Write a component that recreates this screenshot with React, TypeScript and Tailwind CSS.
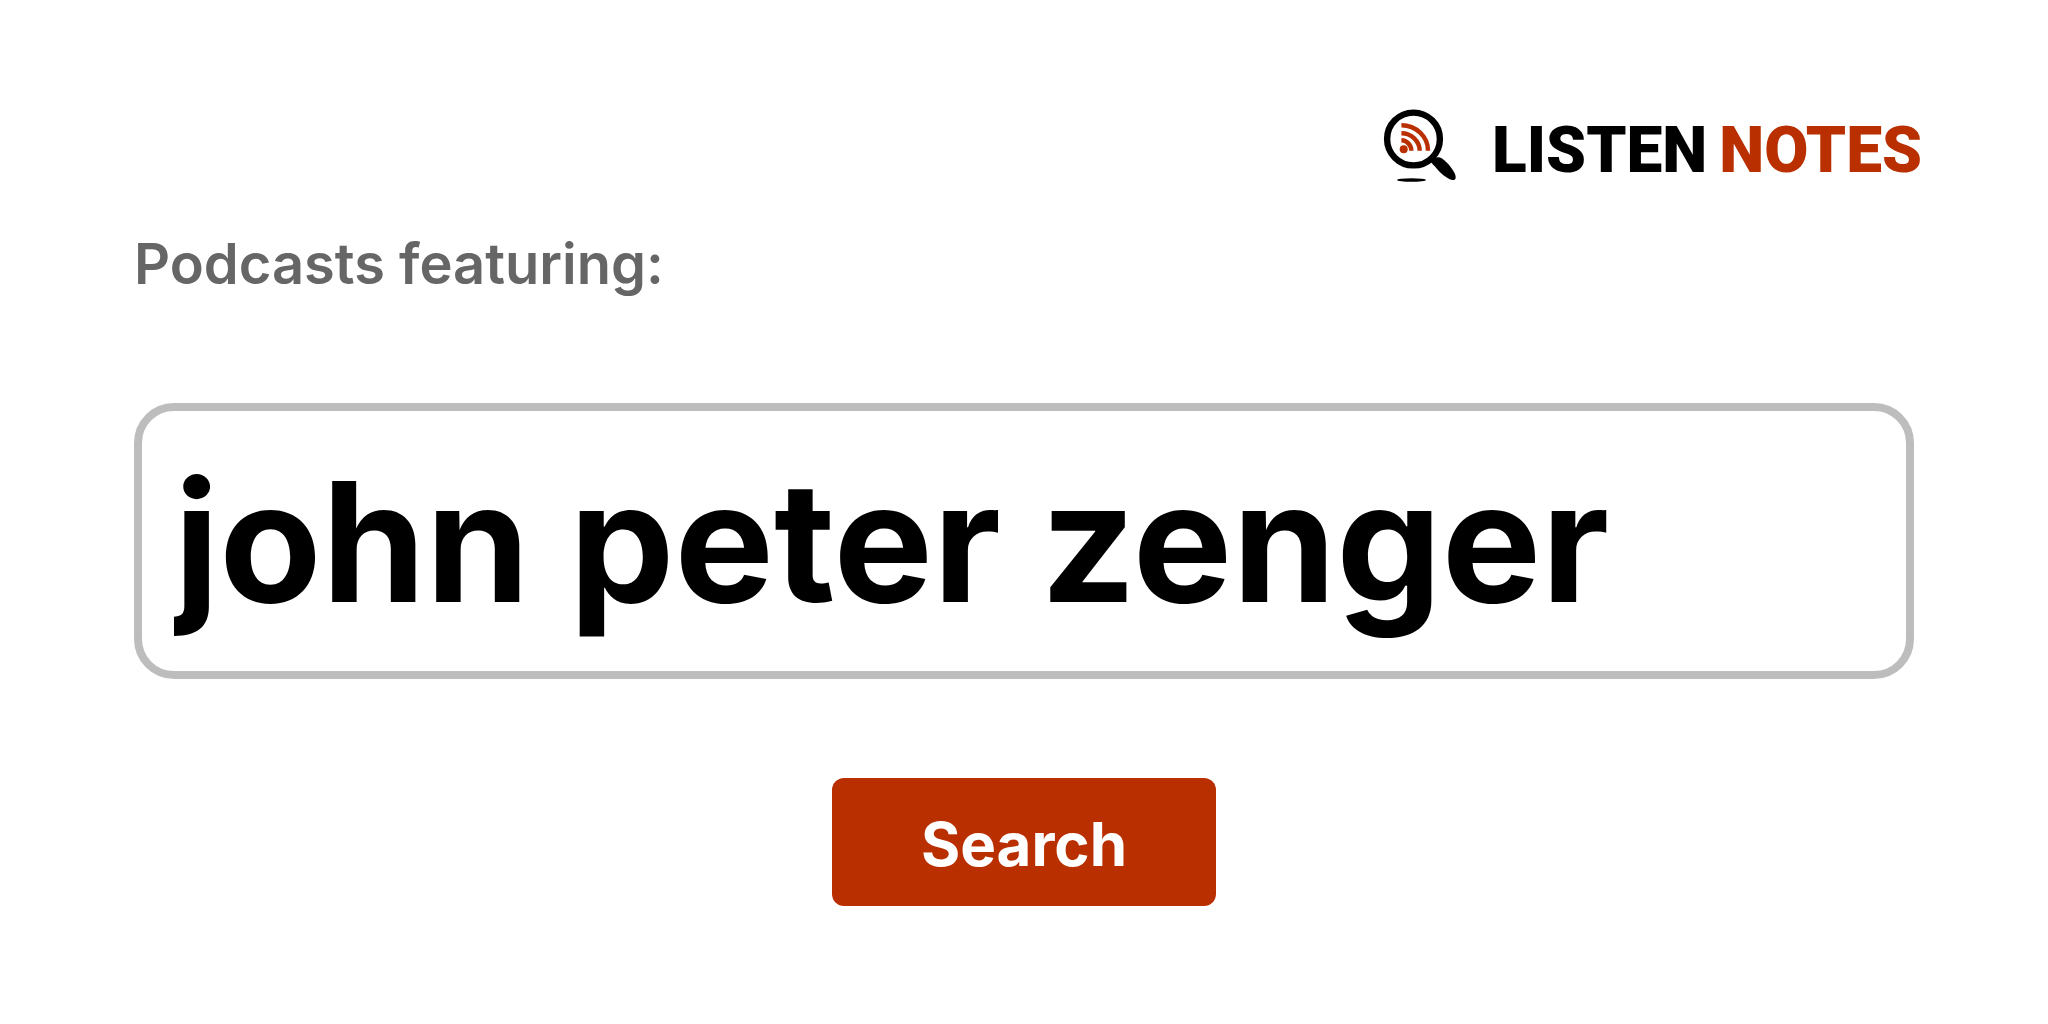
export default function App() {
  return (
    <main className="min-h-screen bg-white px-[134px] pt-[104px] font-['Inter',sans-serif] text-black">
      <header className="-mr-2 flex justify-end">
        <a href="#" className="flex items-start gap-[34px]" aria-label="Listen Notes">
          <svg viewBox="0 0 76 80" className="h-20 w-[76px]" aria-hidden="true">
            <circle cx="31.5" cy="35" r="26.4" fill="none" stroke="#000" strokeWidth="6.4" />
            <path d="M48 52L55 60" stroke="#000" strokeWidth="6.5" />
            <path d="M50.5 58C51 54.5 54 52.5 58 53.5C63 55.5 70 63.5 73 70C74.5 74.5 73.5 76.5 70 76C63 74 53 64.500 50.5 58Z" fill="#000" />
            <ellipse cx="29.5" cy="76" rx="14.5" ry="1.8" fill="#000" />
            <g fill="none" stroke="#b92f00" strokeWidth="4.4">
              <path d="M19.4 36.3A10 10.4 0 0 1 29.3 46.7" />
              <path d="M19.4 29.3A18.3 17.6 0 0 1 37.7 46.7" />
              <path d="M19.4 21.2A26.6 25.5 0 0 1 46 46.7" />
            </g>
            <circle cx="21.7" cy="45.3" r="4" fill="#b92f00" />
          </svg>
          <span className="flex gap-3 font-['Roboto',sans-serif] text-[64px] leading-[94px] font-black">
            <span>LISTEN</span>
            <span className="text-[#b92f00]">NOTES</span>
          </span>
        </a>
      </header>
      <form onSubmit={(e) => e.preventDefault()}>
        <label htmlFor="q" className="mt-[26px] block text-[56px] leading-[80px] font-semibold text-[#666]">
          Podcasts featuring:
        </label>
        <input
          id="q"
          type="text"
          defaultValue="john peter zenger"
          className="mt-[99px] block h-[276px] w-full rounded-[40px] border-8 border-[#bdbdbd] px-8 text-[167px] font-bold"
        />
        <button
          type="submit"
          className="mx-auto mt-[99px] block h-[128px] w-[384px] rounded-xl bg-[#b92f00] pt-1 text-[60px] font-bold text-white"
        >
          Search
        </button>
      </form>
    </main>
  );
}
